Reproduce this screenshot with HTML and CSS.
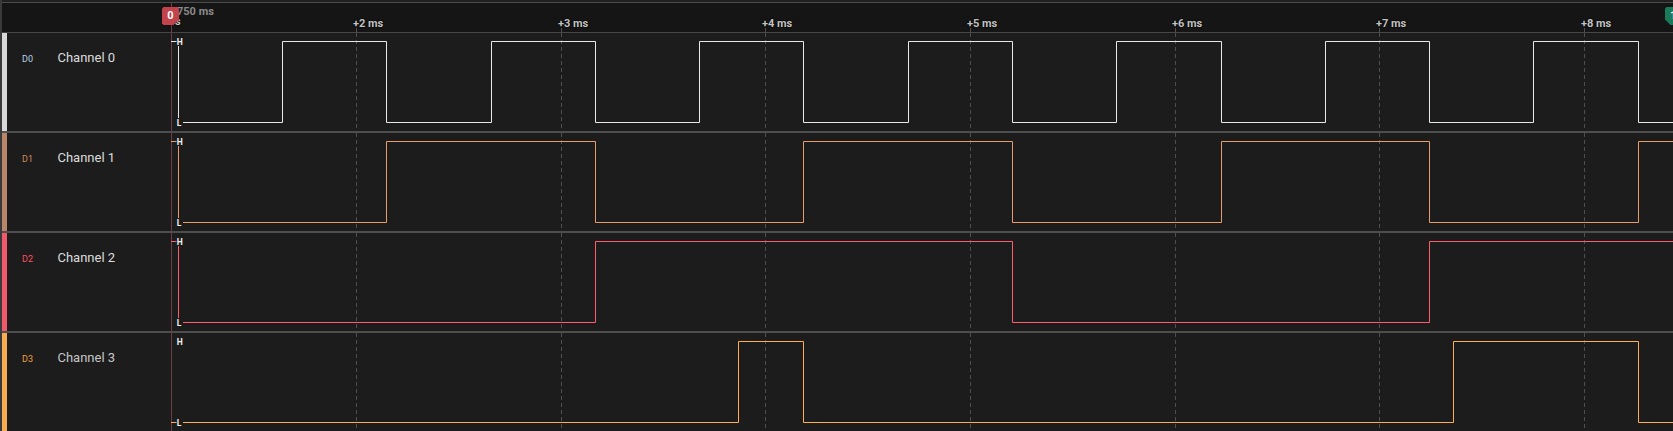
FILE: index.html
```html
<!DOCTYPE html>
<html>
<head>
<meta charset="utf-8">
<link rel="stylesheet" href="styles.css">
</head>
<body>
<div class="app">
  <div class="topbar"></div>
  <div class="ruler">
    <svg class="ruler-grid" width="1671" height="29" viewBox="0 0 1671 29">
      <line class="cursor" x1="169.5" y1="0" x2="169.5" y2="29"/>
      <g class="grid">
        <line x1="354.5" y1="25" x2="354.5" y2="29"/>
        <line x1="559.5" y1="25" x2="559.5" y2="29"/>
        <line x1="763.5" y1="25" x2="763.5" y2="29"/>
        <line x1="968.5" y1="25" x2="968.5" y2="29"/>
        <line x1="1173.5" y1="25" x2="1173.5" y2="29"/>
        <line x1="1377.5" y1="25" x2="1377.5" y2="29"/>
        <line x1="1582.5" y1="25" x2="1582.5" y2="29"/>
      </g>
    </svg>
    <span class="abs-time">750 ms</span>
    <span class="tick tick-zero">0 s</span>
    <span class="tick" style="left:351px">+2 ms</span>
    <span class="tick" style="left:556px">+3 ms</span>
    <span class="tick" style="left:760px">+4 ms</span>
    <span class="tick" style="left:965px">+5 ms</span>
    <span class="tick" style="left:1170px">+6 ms</span>
    <span class="tick" style="left:1374px">+7 ms</span>
    <span class="tick" style="left:1579px">+8 ms</span>
  </div>

  <div class="row ch0">
    <div class="strip"></div>
    <div class="label"><span class="id">D0</span><span class="name">Channel 0</span></div>
    <svg class="wave" width="1503" height="98" viewBox="0 0 1503 98">
      <g class="grid">
        <line x1="186.5" y1="0" x2="186.5" y2="98"/>
        <line x1="391.5" y1="0" x2="391.5" y2="98"/>
        <line x1="595.5" y1="0" x2="595.5" y2="98"/>
        <line x1="800.5" y1="0" x2="800.5" y2="98"/>
        <line x1="1005.5" y1="0" x2="1005.5" y2="98"/>
        <line x1="1209.5" y1="0" x2="1209.5" y2="98"/>
        <line x1="1414.5" y1="0" x2="1414.5" y2="98"/>
      </g>
      <line class="cursor" x1="1.5" y1="0" x2="1.5" y2="98"/>
      <polyline class="sig" points="1,8.5 8.5,8.5 8.5,89.5 112.5,89.5 112.5,8.5 216.5,8.5 216.5,89.5 321.5,89.5 321.5,8.5 425.5,8.5 425.5,89.5 529.5,89.5 529.5,8.5 633.5,8.5 633.5,89.5 738.5,89.5 738.5,8.5 842.5,8.5 842.5,89.5 946.5,89.5 946.5,8.5 1051.5,8.5 1051.5,89.5 1155.5,89.5 1155.5,8.5 1259.5,8.5 1259.5,89.5 1363.5,89.5 1363.5,8.5 1468.5,8.5 1468.5,89.5 1503,89.5"/>
      <rect class="lvl-bg" x="6.5" y="4" width="6.5" height="9"/>
      <rect class="lvl-bg" x="6.5" y="85" width="6.5" height="9"/>
      <text class="lvl" x="6.8" y="11.6">H</text>
      <text class="lvl" x="6.8" y="92.6">L</text>
    </svg>
  </div>

  <div class="row ch1">
    <div class="strip"></div>
    <div class="label"><span class="id">D1</span><span class="name">Channel 1</span></div>
    <svg class="wave" width="1503" height="98" viewBox="0 0 1503 98">
      <g class="grid">
        <line x1="186.5" y1="0" x2="186.5" y2="98"/>
        <line x1="391.5" y1="0" x2="391.5" y2="98"/>
        <line x1="595.5" y1="0" x2="595.5" y2="98"/>
        <line x1="800.5" y1="0" x2="800.5" y2="98"/>
        <line x1="1005.5" y1="0" x2="1005.5" y2="98"/>
        <line x1="1209.5" y1="0" x2="1209.5" y2="98"/>
        <line x1="1414.5" y1="0" x2="1414.5" y2="98"/>
      </g>
      <line class="cursor" x1="1.5" y1="0" x2="1.5" y2="98"/>
      <polyline class="sig" points="1,8.5 8.5,8.5 8.5,89.5 216.5,89.5 216.5,8.5 425.5,8.5 425.5,89.5 633.5,89.5 633.5,8.5 842.5,8.5 842.5,89.5 1051.5,89.5 1051.5,8.5 1259.5,8.5 1259.5,89.5 1468.5,89.5 1468.5,8.5 1503,8.5"/>
      <rect class="lvl-bg" x="6.5" y="4" width="6.5" height="9"/>
      <rect class="lvl-bg" x="6.5" y="85" width="6.5" height="9"/>
      <text class="lvl" x="6.8" y="11.6">H</text>
      <text class="lvl" x="6.8" y="92.6">L</text>
    </svg>
  </div>

  <div class="row ch2">
    <div class="strip"></div>
    <div class="label"><span class="id">D2</span><span class="name">Channel 2</span></div>
    <svg class="wave" width="1503" height="98" viewBox="0 0 1503 98">
      <g class="grid">
        <line x1="186.5" y1="0" x2="186.5" y2="98"/>
        <line x1="391.5" y1="0" x2="391.5" y2="98"/>
        <line x1="595.5" y1="0" x2="595.5" y2="98"/>
        <line x1="800.5" y1="0" x2="800.5" y2="98"/>
        <line x1="1005.5" y1="0" x2="1005.5" y2="98"/>
        <line x1="1209.5" y1="0" x2="1209.5" y2="98"/>
        <line x1="1414.5" y1="0" x2="1414.5" y2="98"/>
      </g>
      <line class="cursor" x1="1.5" y1="0" x2="1.5" y2="98"/>
      <polyline class="sig" points="1,8.5 8.5,8.5 8.5,89.5 425.5,89.5 425.5,8.5 842.5,8.5 842.5,89.5 1259.5,89.5 1259.5,8.5 1503,8.5"/>
      <rect class="lvl-bg" x="6.5" y="4" width="6.5" height="9"/>
      <rect class="lvl-bg" x="6.5" y="85" width="6.5" height="9"/>
      <text class="lvl" x="6.8" y="11.6">H</text>
      <text class="lvl" x="6.8" y="92.6">L</text>
    </svg>
  </div>

  <div class="row ch3">
    <div class="strip"></div>
    <div class="label"><span class="id">D3</span><span class="name">Channel 3</span></div>
    <svg class="wave" width="1503" height="98" viewBox="0 0 1503 98">
      <g class="grid">
        <line x1="186.5" y1="0" x2="186.5" y2="98"/>
        <line x1="391.5" y1="0" x2="391.5" y2="98"/>
        <line x1="595.5" y1="0" x2="595.5" y2="98"/>
        <line x1="800.5" y1="0" x2="800.5" y2="98"/>
        <line x1="1005.5" y1="0" x2="1005.5" y2="98"/>
        <line x1="1209.5" y1="0" x2="1209.5" y2="98"/>
        <line x1="1414.5" y1="0" x2="1414.5" y2="98"/>
      </g>
      <line class="cursor" x1="1.5" y1="0" x2="1.5" y2="98"/>
      <polyline class="sig" points="1,89.5 568.5,89.5 568.5,8.5 633.5,8.5 633.5,89.5 1283.5,89.5 1283.5,8.5 1468.5,8.5 1468.5,89.5 1503,89.5"/>
      <rect class="lvl-bg" x="6.5" y="4" width="6.5" height="9"/>
      <rect class="lvl-bg" x="6.5" y="85" width="6.5" height="9"/>
      <text class="lvl" x="6.8" y="11.6">H</text>
      <text class="lvl" x="6.8" y="92.6">L</text>
    </svg>
  </div>

  <div class="marker marker-red">
    <svg width="17" height="18" viewBox="0 0 17 18"><polygon points="1.5,0 15.5,0 17,1.5 17,12.5 11.5,18 1.5,18 0,16.5 0,1.5"/></svg>
    <span class="marker-text">0</span>
  </div>
  <div class="marker marker-green">
    <svg width="17" height="18" viewBox="0 0 17 18"><polygon points="1.5,0 15.5,0 17,1.5 17,16.5 15.5,18 5.5,18 0,12.5 0,1.5"/></svg>
    <span class="marker-text">1</span>
  </div>
</div>
</body>
</html>
```
FILE: styles.css
```css
html, body {
  margin: 0;
  padding: 0;
  background: #1c1c1c;
  overflow: hidden;
}
body {
  width: 1673px;
  height: 431px;
  font-family: Roboto, "Noto Sans", "Liberation Sans", sans-serif;
}
.app {
  position: relative;
  box-sizing: border-box;
  width: 1673px;
  height: 431px;
  border-left: 2px solid #3a3a3a;
  overflow: hidden;
}
.topbar {
  height: 2px;
  background: #202020;
}
.ruler {
  position: relative;
  height: 29px;
  background: #151515;
  border-top: 1px solid #4b4b4b;
  border-bottom: 1px solid #474747;
}
.ruler-grid {
  display: block;
}
.grid line {
  stroke: #4f4f4f;
  stroke-width: 1;
  stroke-dasharray: 4 3;
}
.cursor {
  stroke: #6e3c45;
  stroke-width: 1;
}
.tick,
.abs-time {
  position: absolute;
  font-size: 11px;
  font-weight: 700;
  line-height: 13px;
  white-space: nowrap;
}
.tick {
  top: 14px;
  color: #c2c2c2;
  text-shadow: 0 0 2px #000, 0 0 1px #000;
}
.tick-zero {
  left: 164px;
  top: 12px;
}
.abs-time {
  left: 175px;
  top: 2px;
  color: #8a8a8a;
}
.row {
  display: flex;
  height: 98px;
  border-bottom: 2px solid #4e4e4e;
}
.strip {
  width: 5px;
  flex: none;
}
.label {
  width: 163px;
  flex: none;
  box-sizing: border-box;
  padding: 17px 0 0 15px;
  display: flex;
  align-items: baseline;
  line-height: 16px;
}
.id {
  width: 35.5px;
  flex: none;
  font-size: 9px;
}
.name {
  font-size: 13px;
  color: #dcdcdc;
}
.wave {
  display: block;
  flex: none;
}
.sig {
  fill: none;
  stroke-width: 1;
}
.lvl-bg {
  fill: #1c1c1c;
}
.lvl {
  font-family: Roboto, "Noto Sans", sans-serif;
  font-size: 8.5px;
  font-weight: 700;
  fill: #f0f0f0;
}
.ch0 .strip { background: #d9d9d9; }
.ch0 .id { color: #bcd3e8; }
.ch0 .sig { stroke: #e8e8e8; }
.ch1 .strip { background: #b8846a; }
.ch1 .id { color: #d08a58; }
.ch1 .sig { stroke: #e89c6a; }
.ch2 .strip { background: #f0596a; }
.ch2 .id { color: #ff4f5f; }
.ch2 .sig { stroke: #ff5d6c; }
.ch3 .strip { background: #f6ad52; }
.ch3 .id { color: #f2a040; }
.ch3 .sig { stroke: #ffad4d; }
.ch3 .name { color: #c6c6c6; }
.marker {
  position: absolute;
  top: 7px;
  width: 17px;
  height: 18px;
}
.marker svg {
  display: block;
}
.marker-red {
  left: 160px;
}
.marker-red polygon {
  fill: #c2434c;
}
.marker-green {
  left: 1663px;
}
.marker-green polygon {
  fill: #1b7a5a;
}
.marker-text {
  position: absolute;
  left: 0;
  top: 2px;
  width: 17px;
  text-align: center;
  font-size: 11px;
  font-weight: 700;
  line-height: 13px;
  color: #ffffff;
}
```
